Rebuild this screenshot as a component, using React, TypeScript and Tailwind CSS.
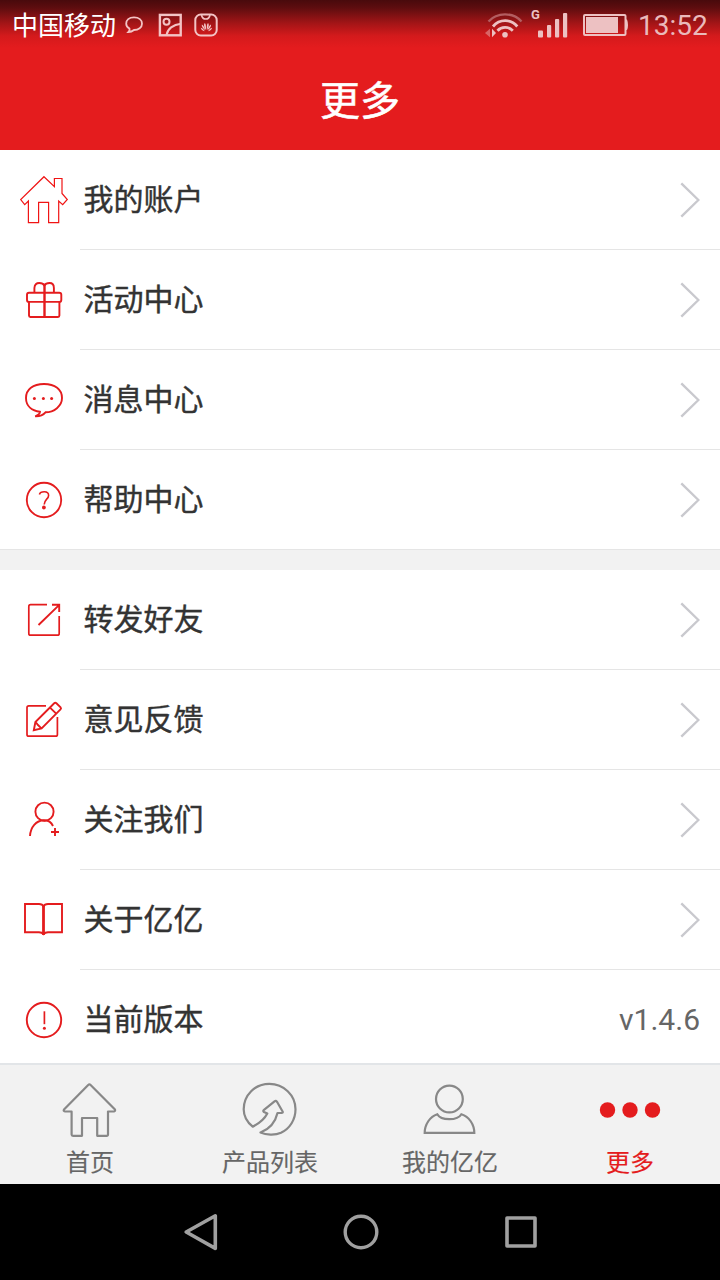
import type { ReactNode } from "react";

function MenuIcon({ children, thin = false }: { children: ReactNode; thin?: boolean }) {
  return (
    <svg
      viewBox="0 0 80 100"
      className="h-[100px] w-20 shrink-0"
      fill="none"
      stroke={thin ? "#f01414" : "#e41c1e"}
      strokeWidth={thin ? 1.2 : 1.9}
    >
      {children}
    </svg>
  );
}

const accountIcon = (
  <MenuIcon thin>
    <path d="M44 26.7 54.4 36.7V28.5H62V43.5L67.3 49.5 62.7 54.7 58.7 51V72.7H48.6V52.3H38.6V72.7H28.4V51L24.7 54.7 20.7 49.5Z" />
  </MenuIcon>
);
const giftIcon = (
  <MenuIcon>
    <rect x="27" y="42.7" width="34.3" height="9.2" rx="2" />
    <path d="M29 52V65.6Q29 67 30.4 67H58Q59.4 67 59.4 65.6V52M34.4 42.5V38Q34.8 33 39.3 33 43 33 44.4 35.4 45.8 33 49.5 33 53.9 33 53.9 38V42.5" />
    <path d="M44.5 35V67" strokeWidth="2.4" />
  </MenuIcon>
);
const messageIcon = (
  <MenuIcon>
    <path d="M44 34C55 34 62 39.5 62 48 62 56 54 62.3 45.5 62.3 42.5 65.7 39 66.5 35.2 66.3 38.5 65 40 63.5 40 61.8 32 60.7 26 56 26 48 26 39.5 33 34 44 34Z" />
    <g fill="#e41c1e" stroke="none">
      <circle cx="34.4" cy="48.5" r="1.5" />
      <circle cx="43.4" cy="48.5" r="1.5" />
      <circle cx="51.6" cy="48.5" r="1.5" />
    </g>
  </MenuIcon>
);
const helpIcon = (
  <MenuIcon>
    <circle cx="44" cy="50" r="17.2" />
    <path d="M39.4 44.5C40.4 41 48.6 40.4 48.6 45.4 48.6 49 44.2 49.5 44.2 54.6" strokeWidth="1.6" />
    <circle cx="43.9" cy="57.5" r="1.9" fill="#e41c1e" stroke="none" />
  </MenuIcon>
);
const shareIcon = (
  <MenuIcon>
    <path d="M47 34.6H30.6Q28.8 34.6 28.8 36.4V63.4Q28.8 65.2 30.6 65.2H57.4Q59.2 65.2 59.2 63.4V46" strokeWidth="1.7" />
    <path d="M38.5 55 58.5 35.6M52 34.7H59.2V42" />
  </MenuIcon>
);
const editIcon = (
  <MenuIcon>
    <path d="M46 35.8H28.8Q27 35.8 27 37.6V64.4Q27 66.2 28.8 66.2H55.6Q57.4 66.2 57.4 64.4V47" strokeWidth="1.7" />
    <path d="M33.8 60.3 35.4 52 54.2 33.3Q55.3 32.3 56.4 33.3L60.6 37.4Q61.5 38.4 60.5 39.4L41.6 58.5ZM50 37.6 56.2 43.6M35.6 52 38 55 41.4 58.4" />
  </MenuIcon>
);
const followIcon = (
  <MenuIcon>
    <circle cx="44.5" cy="41.7" r="9.1" />
    <path d="M30 66C30.6 57 36 50.6 44 50.3 48.6 50.3 51.4 52.4 53 56" />
    <path d="M51 62H59M55 58V66" />
  </MenuIcon>
);
const bookIcon = (
  <MenuIcon>
    <path d="M43.5 36.5Q42.5 34 39 34H25V62.2H39Q42 62.3 43.5 64 45 62.3 48 62.2H62V34H48Q44.5 34 43.5 36.5Z" />
    <path d="M43.5 36V65" strokeWidth="2.8" />
  </MenuIcon>
);
const versionIcon = (
  <MenuIcon>
    <circle cx="44" cy="50" r="17.2" />
    <path d="M44.4 41.3V54.2" strokeWidth="1.7" />
    <circle cx="44.4" cy="58.2" r="1.5" fill="#e41c1e" stroke="none" />
  </MenuIcon>
);

function Row({ icon, label, value, last = false }: { icon: ReactNode; label: string; value?: string; last?: boolean }) {
  return (
    <div className="flex h-[100px] shrink-0">
      {icon}
      <div className={`flex flex-1 items-center justify-between pl-[3.5px] pr-5 ${last ? "" : "border-b border-[#e5e5e5]"}`}>
        <span className="pb-[6px] text-[30px] leading-[44px] text-[#333] [-webkit-text-stroke:0.4px]">{label}</span>
        {value ? (
          <span className="font-['Roboto',sans-serif] text-[30px] leading-[44px] text-[#666]">{value}</span>
        ) : (
          <svg viewBox="0 0 20 36" className="h-9 w-5" fill="none" stroke="#c9c9ce" strokeWidth="2.4">
            <path d="M1.3 1.3 18.4 18 1.3 34.7" />
          </svg>
        )}
      </div>
    </div>
  );
}

function Tab({ label, active = false, children }: { label: string; active?: boolean; children: ReactNode }) {
  return (
    <div className={`flex w-[180px] flex-col items-center ${active ? "text-[#e41c1e]" : "text-[#666]"}`}>
      <svg viewBox="0 0 180 80" className="h-20 w-[180px]" fill="none" stroke="#888" strokeWidth="2.2" strokeLinejoin="round">
        {children}
      </svg>
      <span className="text-2xl leading-[31px] [-webkit-text-stroke:0.15px]">{label}</span>
    </div>
  );
}

function StatusBar() {
  return (
    <div className="flex h-[50px] items-center bg-[linear-gradient(to_bottom,#480a0c_0px,#5e0d0f_8px,#a61517_24px,#d41a1c_36px,#e41c1e_48px)] pl-3 pr-3">
      <span className="w-[104px] whitespace-nowrap pb-[2px] text-[26px] leading-[48px] text-white">中国移动</span>
      <svg viewBox="116 0 110 50" className="h-[50px] w-[110px]" fill="none" stroke="#f3c4c5" strokeWidth="2">
        <path d="M134 17.3C139 17.3 142 20 142 23.7 142 27.5 138.5 30 134 30Q131.5 32 128.5 32 130 30.6 129.5 28.6 126.2 26.8 126.2 23.7C126.2 20 129 17.3 134 17.3Z" strokeWidth="1.8" />
        <rect x="159.9" y="14.9" width="20.8" height="20.4" strokeWidth="2.4" />
        <circle cx="166.5" cy="21.7" r="3" />
        <path d="M166.5 35C167.5 29 173 24.5 181 23.7" />
        <rect x="195.3" y="14.5" width="21.4" height="21" rx="5.5" />
        <path d="M201.5 15C202.5 20.4 209 20.4 210 15" strokeWidth="1.6" />
        <g fill="#f3c4c5" stroke="none">
          <path d="M206 30Q202.8 25.5 204.7 23Q206.3 24 206 30Z" />
          <path d="M206.8 30Q206.5 24 208.1 23Q210 25.5 206.8 30Z" />
          <path d="M205.3 30.2Q201.3 27.5 201.8 24.6Q204 25.6 205.3 30.2Z" />
          <path d="M207.5 30.2Q208.8 25.6 211 24.6Q211.5 27.5 207.5 30.2Z" />
          <path d="M204.8 31.2Q201.2 30.6 200.7 27.8Q203 28.2 204.8 31.2Z" />
          <path d="M208 31.2Q209.8 28.2 212.1 27.8Q211.6 30.6 208 31.2Z" />
        </g>
      </svg>
      <div className="flex-1" />
      <svg viewBox="484 0 150 50" className="h-[50px] w-[150px]" fill="none" stroke="#edc1c2">
        <path d="M488.5 21.5C497 12 513 12 521.5 21.5" stroke="#b35d60" strokeWidth="2.4" />
        <path d="M493 26.5C499.5 18.7 511 18.7 517.3 26.5" strokeWidth="2.8" />
        <path d="M497.5 30.7C501.5 26.3 508.5 26.3 512.8 30.7" strokeWidth="2.8" />
        <g fill="#edc1c2" stroke="none">
          <circle cx="505" cy="34.7" r="2.8" />
          <path d="M492 28.7V37.3L496 33Z" />
          <path d="M490 28.7V37.3L485 33Z" opacity=".45" />
          <rect x="538" y="30.5" width="5" height="7" rx="1" />
          <rect x="547" y="25" width="4.2" height="12.5" rx="1" />
          <rect x="555" y="19" width="4.2" height="18.5" rx="1" />
          <rect x="563" y="13" width="4.2" height="24.5" rx="1" />
          <rect x="586" y="17" width="32" height="16" />
          <path d="M625.5 19.5H627Q628 22 628 25T627 30H625.5Z" />
          <text x="531" y="19" fontSize="13" fontWeight="700" fontFamily="Roboto, sans-serif">G</text>
        </g>
        <rect x="584" y="15" width="41.5" height="20" rx="1" strokeWidth="2" />
      </svg>
      <span className="w-[74px] whitespace-nowrap pl-[4px] pt-[2px] font-['Roboto',sans-serif] text-[28px] leading-[48px] text-[#eababb]">13:52</span>
    </div>
  );
}

export default function App() {
  return (
    <div className="flex h-[1280px] w-[720px] flex-col overflow-hidden bg-white font-['Noto_Sans_CJK_SC',sans-serif]">
      <header className="h-[150px] shrink-0 bg-[#e41c1e]">
        <StatusBar />
        <h1 className="text-center text-[40px] font-normal leading-[97px] text-white [-webkit-text-stroke:0.5px]">更多</h1>
      </header>
      <main className="flex h-[913px] shrink-0 flex-col overflow-hidden">
        <Row icon={accountIcon} label="我的账户" />
        <Row icon={giftIcon} label="活动中心" />
        <Row icon={messageIcon} label="消息中心" />
        <div className="h-[99px] shrink-0">
          <Row icon={helpIcon} label="帮助中心" last />
        </div>
        <div className="z-10 h-[21px] shrink-0 border-t border-[#e5e5e5] bg-[#f2f2f2]" />
        <Row icon={shareIcon} label="转发好友" />
        <Row icon={editIcon} label="意见反馈" />
        <Row icon={followIcon} label="关注我们" />
        <Row icon={bookIcon} label="关于亿亿" />
        <Row icon={versionIcon} label="当前版本" value="v1.4.6" last />
      </main>
      <nav className="flex h-[121px] shrink-0 border-t-2 border-[#e2e5e8] bg-[#f2f2f2]">
        <Tab label="首页">
          <path d="M88.2 20Q89.4 18.8 90.6 20L115 44.5Q115.5 46.2 114 46.5H108V69.5Q108 70.8 106.5 70.8H97.2V53H82V70.8H73Q71.6 70.8 71.6 69.5V46.5H65Q63 46.2 64 44.5Z" />
        </Tab>
        <Tab label="产品列表">
          <path d="M72.7 61.7C79 58.5 84.5 54 87.3 48.5L84 47Q82.5 46 84 44.8L94.5 36.3Q96 35.3 97 36.8L102.6 46.5Q103.2 48 101.5 48H97.5C95.5 56.5 90 64 80.5 67.5C86 70 95 70.5 101 67.8C110 63.5 115.5 54.5 115.5 44.3C115.5 30 103.5 18.8 89.4 18.8C75 18.8 63.7 30 63.7 44.3C63.7 51 67.5 57.5 72.7 61.7Z" />
        </Tab>
        <Tab label="我的亿亿">
          <circle cx="89.4" cy="34" r="13.4" />
          <path d="M64.7 67.8C64.7 59.5 70 51.5 77.3 49.2 81 55.8 97.5 55.8 101.4 49.2 109 51.5 114.3 59.5 114.3 67.8Z" strokeLinejoin="miter" />
        </Tab>
        <Tab label="更多" active>
          <g fill="#e41c1e" stroke="none">
            <circle cx="67.5" cy="45" r="7.7" />
            <circle cx="90" cy="45" r="7.7" />
            <circle cx="112.5" cy="45" r="7.7" />
          </g>
        </Tab>
      </nav>
      <footer className="flex h-24 shrink-0 items-center justify-center gap-[120px] bg-black">
        <svg viewBox="0 0 40 40" className="h-10 w-10" fill="none" stroke="#a0a0a0" strokeWidth="3.6" strokeLinejoin="round">
          <path d="M6.2 20 35.3 3.8V36.4Z" />
        </svg>
        <svg viewBox="0 0 40 40" className="h-10 w-10" fill="none" stroke="#a0a0a0" strokeWidth="3.4">
          <circle cx="21" cy="20" r="15.8" />
        </svg>
        <svg viewBox="0 0 40 40" className="h-10 w-10" fill="none" stroke="#a0a0a0" strokeWidth="3.6" strokeLinejoin="round">
          <rect x="7" y="6" width="28" height="28" />
        </svg>
      </footer>
    </div>
  );
}
